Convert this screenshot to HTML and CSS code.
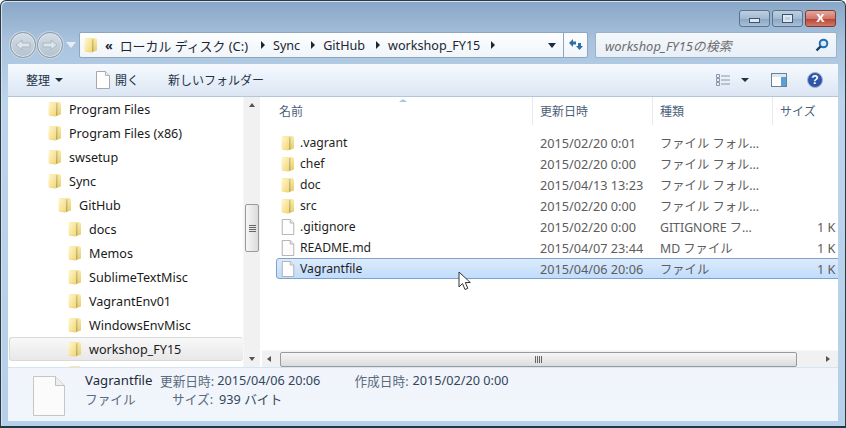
FILE: index.html
```html
<!DOCTYPE html>
<html lang="ja">
<head>
<meta charset="utf-8">
<title>workshop_FY15</title>
<link rel="stylesheet" href="styles.css">
</head>
<body>
<svg class="sprite" width="0" height="0" aria-hidden="true">
  <defs>
    <linearGradient id="fold" x1="0" x2="1" y1="0" y2="1">
      <stop offset="0" stop-color="#fff8d0"/><stop offset="1" stop-color="#f4d676"/>
    </linearGradient>
    <linearGradient id="foldb" x1="0" x2="0" y1="0" y2="1">
      <stop offset="0" stop-color="#cfc68c"/><stop offset="1" stop-color="#a8ab78"/>
    </linearGradient>
    <linearGradient id="foldr" x1="0" x2="0" y1="0" y2="1">
      <stop offset="0" stop-color="#fbeaa6"/><stop offset="1" stop-color="#eccb62"/>
    </linearGradient>
    <symbol id="folder" viewBox="0 0 14 16">
      <path d="M1.500 1h10l1.500 1.500v11l-6 2-5.500-1z" fill="url(#foldr)"/>
      <path d="M.5 1.500l7.500 .8v12.700l-7.500-.8z" fill="url(#fold)"/>
      <path d="M8 2.300l1.500-.6v12.500l-1.500 .8z" fill="url(#foldb)"/>
    </symbol>
    <symbol id="doc" viewBox="0 0 14 18">
      <path d="M.5.500h9l4 4v13h-13z" fill="#fdfdfd" stroke="#a8a8a8"/>
      <path d="M9.500.500v4h4" fill="#eee" stroke="#b0b0b0"/>
    </symbol>
  </defs>
</svg>
<div class="window">
  <div class="caption">
    <div class="capbtn"><span class="glyph-min"></span></div>
    <div class="capbtn"><span class="glyph-max"></span></div>
    <div class="capbtn close"><span class="glyph-x">x</span></div>
  </div>
  <div class="navrow">
    <div class="navpair">
      <div class="round"><svg width="18" height="14" viewBox="0 0 18 14"><path d="M2 7l6-5v3h8v4h-8v3z" fill="#dde5ec" stroke="#aab6c2"/></svg></div>
      <div class="round"><svg width="18" height="14" viewBox="0 0 18 14"><path d="M16 7l-6-5v3h-8v4h8v3z" fill="#dde5ec" stroke="#aab6c2"/></svg></div>
      <span class="navdrop"></span>
    </div>
    <div class="address">
      <svg class="addr-folder" width="14" height="16"><use href="#folder"/></svg>
      <div class="crumbs">
        <span class="chev">«</span>
        <span class="crumb jp">ローカル ディスク (C:)</span><span class="tri"></span>
        <span class="crumb">Sync</span><span class="tri"></span>
        <span class="crumb">GitHub</span><span class="tri"></span>
        <span class="crumb">workshop_FY15</span><span class="tri"></span>
      </div>
      <span class="addr-drop"></span>
      <div class="refresh"><svg width="16" height="14" viewBox="0 0 16 14"><path d="M1 5l4-4v2.500h3v3h-3v2.500z" fill="#2f6fa8"/><path d="M15 8l-3.500 4-3.500-4h2v-3h3v3z" fill="#2f6fa8"/></svg></div>
    </div>
    <div class="search">
      <span class="search-text">workshop_FY15の検索</span>
      <svg width="14" height="14" viewBox="0 0 14 14"><circle cx="8.500" cy="5.500" r="3.800" fill="#dceaf8" stroke="#1f6fb5" stroke-width="2"/><path d="M5.500 8.500l-4 4" stroke="#16406c" stroke-width="2.400"/></svg>
    </div>
  </div>
  <div class="panel">
    <div class="toolbar">
      <span class="tool organize">整理<span class="down"></span></span>
      <span class="tool open"><svg width="14" height="18"><use href="#doc"/></svg>開く</span>
      <span class="tool newfolder">新しいフォルダー</span>
      <span class="tool-right">
        <svg width="15" height="12" viewBox="0 0 15 12"><g fill="none" stroke="#8a97a8"><path d="M.5.500h3v3h-3zM.5 4.500h3v3h-3zM.5 8.500h3v3h-3z"/><path d="M5 2h9M5 6h9M5 10h9"/></g></svg>
        <span class="down view-down"></span>
        <svg class="pane-ico" width="16" height="14" viewBox="0 0 16 14"><rect x=".5" y=".5" width="15" height="13" fill="#fff" stroke="#6c8197"/><rect x="10" y="1" width="5" height="12" fill="#5aa0d0"/><rect x="1" y="1" width="14" height="3" fill="#dfe8f2"/></svg>
        <svg class="help" width="16" height="16" viewBox="0 0 16 16"><circle cx="8" cy="8" r="7.500" fill="#2f55a8" stroke="#9fb6d6"/><text x="8" y="12" text-anchor="middle" class="help-q">?</text></svg>
      </span>
    </div>
    <div class="main">
      <div class="tree">
        <div class="node d1"><svg width="14" height="16"><use href="#folder"/></svg>Program Files</div>
        <div class="node d1"><svg width="14" height="16"><use href="#folder"/></svg>Program Files (x86)</div>
        <div class="node d1"><svg width="14" height="16"><use href="#folder"/></svg>swsetup</div>
        <div class="node d1"><svg width="14" height="16"><use href="#folder"/></svg>Sync</div>
        <div class="node d2"><svg width="14" height="16"><use href="#folder"/></svg>GitHub</div>
        <div class="node d3"><svg width="14" height="16"><use href="#folder"/></svg>docs</div>
        <div class="node d3"><svg width="14" height="16"><use href="#folder"/></svg>Memos</div>
        <div class="node d3"><svg width="14" height="16"><use href="#folder"/></svg>SublimeTextMisc</div>
        <div class="node d3"><svg width="14" height="16"><use href="#folder"/></svg>VagrantEnv01</div>
        <div class="node d3"><svg width="14" height="16"><use href="#folder"/></svg>WindowsEnvMisc</div>
        <div class="node d3 current"><svg width="14" height="16"><use href="#folder"/></svg>workshop_FY15</div>
        <div class="node d3"><svg width="14" height="16"><use href="#folder"/></svg></div>
      </div>
      <div class="vscroll">
        <span class="arrow-up"></span>
        <div class="vtrack"><div class="vthumb"><span class="grip-h"></span></div></div>
        <span class="arrow-down"></span>
      </div>
      <div class="files">
        <div class="header">
          <span class="sort"></span>
          <div class="hcell c-name">名前</div>
          <div class="hcell c-date">更新日時</div>
          <div class="hcell c-type">種類</div>
          <div class="hcell c-size">サイズ</div>
        </div>
        <div class="rows">
          <div class="row"><div class="c-name"><svg width="14" height="16"><use href="#folder"/></svg><span class="fname">.vagrant</span></div><div class="c-date">2015/02/20 0:01</div><div class="c-type">ファイル フォル...</div><div class="c-size"></div></div>
          <div class="row"><div class="c-name"><svg width="14" height="16"><use href="#folder"/></svg><span class="fname">chef</span></div><div class="c-date">2015/02/20 0:00</div><div class="c-type">ファイル フォル...</div><div class="c-size"></div></div>
          <div class="row"><div class="c-name"><svg width="14" height="16"><use href="#folder"/></svg><span class="fname">doc</span></div><div class="c-date">2015/04/13 13:23</div><div class="c-type">ファイル フォル...</div><div class="c-size"></div></div>
          <div class="row"><div class="c-name"><svg width="14" height="16"><use href="#folder"/></svg><span class="fname">src</span></div><div class="c-date">2015/02/20 0:00</div><div class="c-type">ファイル フォル...</div><div class="c-size"></div></div>
          <div class="row"><div class="c-name"><svg width="14" height="16"><use href="#doc"/></svg><span class="fname">.gitignore</span></div><div class="c-date">2015/02/20 0:00</div><div class="c-type">GITIGNORE フ...</div><div class="c-size">1 K</div></div>
          <div class="row"><div class="c-name"><svg width="14" height="16"><use href="#doc"/></svg><span class="fname">README.md</span></div><div class="c-date">2015/04/07 23:44</div><div class="c-type">MD ファイル</div><div class="c-size">1 K</div></div>
          <div class="row selected"><div class="c-name"><svg width="14" height="16"><use href="#doc"/></svg><span class="fname">Vagrantfile</span></div><div class="c-date">2015/04/06 20:06</div><div class="c-type">ファイル</div><div class="c-size">1 K</div></div>
        </div>
        <div class="hscroll">
          <span class="arrow-left"></span>
          <div class="hthumb"><span class="grip-v"></span></div>
          <span class="arrow-right"></span>
        </div>
      </div>
      <svg class="cursor" width="14" height="20" viewBox="0 0 14 20"><path d="M1 1v15l3.500-3.500 2.500 6 2.800-1.200-2.500-5.800h5z" fill="#fff" stroke="#333"/></svg>
    </div>
    <div class="details">
      <svg class="bigdoc" width="32" height="40" viewBox="0 0 32 40"><path d="M.5.500h22l9 9v30h-31z" fill="#fbfbfb" stroke="#c6c6c6"/><path d="M22.500.500v9h9" fill="#eee" stroke="#c0c0c0"/></svg>
      <div class="meta">
        <div class="meta-row"><span class="m-name">Vagrantfile</span><span class="m-label">更新日時:</span><span class="m-val">2015/04/06 20:06</span><span class="m-label m-gap">作成日時:</span><span class="m-val">2015/02/20 0:00</span></div>
        <div class="meta-row"><span class="m-type">ファイル</span><span class="m-label m-size">サイズ:</span><span class="m-val">939 バイト</span></div>
      </div>
    </div>
  </div>
</div>
</body>
</html>
```
FILE: styles.css
```css
* { box-sizing: border-box; }
html, body { margin: 0; padding: 0; }
body {
  width: 846px; height: 428px; overflow: hidden; background: #fff;
  font: 12px "Noto Sans", "Noto Sans CJK JP", sans-serif; color: #1e2a38;
}
svg { flex: none; display: block; }
.sprite { position: absolute; }
.window {
  width: 846px; height: 428px;
  border: 1px solid #2c3a46; border-bottom: 2px solid #1d3a44; border-radius: 6px 6px 0 0;
  background: linear-gradient(#88a6c6 0, #a9c3de 40px, #bcd4ec 100px, #b6d0ea 100%);
  box-shadow: inset 1px 1px 0 #d6e2ee;
  display: flex; flex-direction: column; padding: 0 7px 5px 7px;
  overflow: hidden;
}
.caption { height: 25px; padding: 9px 2px 0 0; display: flex; justify-content: flex-end; flex: none; }
.capbtn {
  width: 31px; height: 17px; margin-left: 2px;
  border: 1px solid #5d7288; border-radius: 3px;
  background: linear-gradient(#bdd0e2, #a2bad2 50%, #8aa6c2 51%, #a6c0da);
  display: flex; align-items: center; justify-content: center;
}
.capbtn.close { width: 31px; border-color: #7a3d36; background: linear-gradient(#e4a79c, #d0776a 50%, #b9412f 51%, #d0796a); }
.glyph-min { width: 11px; height: 5px; margin-top: 4px; background: #dfe8f1; border: 1px solid #41566c; }
.glyph-max { width: 11px; height: 9px; background: #bfd0e0; border: 1px solid #41566c; box-shadow: inset 0 0 0 2px #dfe8f1; }
.glyph-x { font: bold 15px/15px "Liberation Sans", sans-serif; color: #fff; margin-top: -4px; }
.navrow { height: 26px; display: flex; align-items: stretch; flex: none; margin: 6px 0 6px 0; padding-right: 1px; }
.navpair { width: 71px; display: flex; align-items: center; padding-left: 2px; flex: none; }
.round {
  width: 26px; height: 26px; border-radius: 50%; margin-right: 1px;
  border: 1px solid #8d9aa6; box-shadow: 0 0 0 1px #c6d4e2, inset 0 0 0 1px #e2e8ee;
  background: linear-gradient(#d4dde6, #b4c2cf);
  display: flex; align-items: center; justify-content: center;
}
.navdrop { width: 0; height: 0; margin-left: 2px; border: 5px solid transparent; border-top: 6px solid #e7eef6; border-bottom: 0; }
.address {
  width: 509px; border: 1px solid #8fa5bb; border-radius: 2px;
  background: linear-gradient(#fdfeff, #f0f5fa); display: flex; align-items: center; padding-left: 4px; flex: none;
}
.crumbs { flex: 1; display: flex; align-items: center; gap: 0; margin-left: 7px; font-size: 12.6px; color: #1c2530; white-space: nowrap; }
.chev { font-weight: bold; margin-right: 7px; }
.crumb { margin-right: 11px; }
.crumb.jp { font-size: 12.9px; margin-right: 13px; }
.tri { width: 0; height: 0; border-left: 4px solid #1c2530; border-top: 4px solid transparent; border-bottom: 4px solid transparent; margin-right: 8px; }
.addr-drop { width: 0; height: 0; border: 4px solid transparent; border-top: 5px solid #1a2a3c; border-bottom: 0; margin-right: 7px; }
.refresh { width: 24px; height: 100%; border-left: 1px solid #8fa5bb; display: flex; align-items: center; justify-content: center; }
.search {
  width: 242px; margin-left: 7px; flex: none; border: 1px solid #9db2c7; border-radius: 2px;
  background: linear-gradient(#f4f8fc, #e8eff7); display: flex; align-items: center; justify-content: space-between; padding: 0 7px 0 9px;
}
.search-text { font-style: italic; color: #6d6d6d; font-size: 12.9px; }
.panel { flex: 1; display: flex; flex-direction: column; background: #fff; min-height: 0; }
.toolbar {
  height: 33px; flex: none; display: flex; align-items: center; position: relative;
  background: linear-gradient(#f6faff, #e8f0f9 50%, #dbe6f3);
  border-bottom: 1px solid #b3c6da; color: #1e3347; padding-left: 18px;
}
.tool { display: flex; align-items: center; white-space: nowrap; }
.organize { width: 70px; }
.open { width: 72px; gap: 5px; }
.down { display: inline-block; width: 0; height: 0; border: 4px solid transparent; border-top: 4px solid #1e3347; border-bottom: 0; margin-left: 5px; }
.tool-right { margin-left: auto; display: flex; align-items: center; padding-right: 15px; }
.view-down { margin-left: 10px; margin-right: 22px; }
.pane-ico { margin-right: 20px; }
.help-q { font: bold 12px "Liberation Sans", sans-serif; fill: #fff; }
.main { flex: 1; display: flex; min-height: 0; position: relative; }
.tree { width: 235px; flex: none; overflow: hidden; font-size: 12.6px; }
.node { height: 24px; display: flex; align-items: center; gap: 7px; white-space: nowrap; color: #1a1a1a; }
.d1 { padding-left: 40px; }
.d2 { padding-left: 50px; }
.d3 { padding-left: 60px; }
.current {
  margin-left: 1px; padding-left: 58px; border: 1px solid #d9d9d9; border-right: 0; border-radius: 3px;
  background: linear-gradient(#f8f8f8, #e8e8e8);
}
.vscroll { width: 17px; flex: none; background: #f1f1f1; display: flex; flex-direction: column; align-items: center; border-left: 1px solid #f7f7f7; }
.arrow-up, .arrow-down { width: 0; height: 0; border: 3.500px solid transparent; margin: 6px 0; flex: none; }
.arrow-up { border-bottom: 4px solid #555; border-top: 0; }
.arrow-down { border-top: 4px solid #555; border-bottom: 0; }
.vtrack { flex: 1; width: 100%; padding-top: 91px; }
.vthumb {
  height: 48px; margin: 0 1px; border: 1px solid #9a9a9a; border-radius: 2px;
  background: linear-gradient(90deg, #f6f6f6, #dcdcdc); display: flex; align-items: center; justify-content: center;
}
.grip-h { width: 7px; height: 7px; background: repeating-linear-gradient(#666 0 1px, transparent 1px 2px); }
.files { flex: 1; min-width: 0; display: flex; flex-direction: column; margin-left: 2px; overflow: hidden; position: relative; }
.header { height: 28px; flex: none; display: flex; color: #4c607a; position: relative; padding-left: 9px; align-items: stretch; }
.sort { position: absolute; left: 137px; top: 2px; width: 0; height: 0; border: 4px solid transparent; border-bottom: 3px solid #a9c4dc; border-top: 0; }
.hcell { border-right: 1px solid #e6eaf0; padding-top: 5px; padding-left: 8px; }
.c-name { width: 262px; flex: none; }
.c-date { width: 120px; flex: none; padding-left: 7px; }
.c-type { width: 120px; flex: none; padding-left: 7px; white-space: nowrap; }
.c-size { flex: none; width: 64px; padding-left: 44px; white-space: nowrap; }
.hcell.c-date { padding-left: 7px; }
.hcell.c-size { padding-left: 7px; border-right: 0; }
.rows { flex: 1; padding-top: 7px; padding-left: 14px; min-height: 0; }
.row { height: 21px; display: flex; align-items: center; color: #5d5d5d; margin-right: -30px; }
.row .c-name { display: flex; align-items: center; gap: 5px; width: 257px; padding-left: 5px; font-size: 12.2px; }
.row .c-date { font-size: 12.7px; }
.row .c-type { font-size: 12.3px; }
.row .c-size { font-size: 12.7px; }
.fname { color: #1e1e1e; }
.selected {
  border: 1px solid #7da2ce; border-radius: 3px;
  background: linear-gradient(#dcebfc, #c1dcfc);
}
.selected .c-name { padding-left: 4px; width: 256px; }
.hscroll { height: 17px; flex: none; background: #f1f1f1; display: flex; align-items: center; position: relative; border-top: 1px solid #f7f7f7; }
.arrow-left, .arrow-right { width: 0; height: 0; border: 3.500px solid transparent; flex: none; }
.arrow-left { border-right: 4px solid #555; border-left: 0; margin-left: 5px; }
.arrow-right { border-left: 4px solid #555; border-right: 0; margin-left: 29px; }
.hthumb {
  width: 517px; height: 15px; margin-left: 9px; border: 1px solid #9a9a9a; border-radius: 2px;
  background: linear-gradient(#f6f6f6, #dcdcdc); display: flex; align-items: center; justify-content: center;
}
.grip-v { width: 7px; height: 7px; background: repeating-linear-gradient(90deg, #666 0 1px, transparent 1px 2px); }
.cursor { position: absolute; left: 450px; top: 174px; }
.details {
  height: 54px; flex: none; background: linear-gradient(#f1f5fb, #f1f5fc); border-top: 1px solid #d6e3f0;
  display: flex; padding-left: 25px; color: #5a6b7d;
}
.bigdoc { margin-top: 8px; }
.meta { margin-left: 20px; padding-top: 3px; font-size: 12.7px; }
.meta-row { height: 18px; display: flex; align-items: center; white-space: nowrap; }
.m-name { color: #1e2a38; width: 75px; font-size: 13.2px; }
.m-label { margin-right: 3px; }
.m-val { color: #33475b; }
.m-gap { margin-left: 34px; margin-right: 4px; }
.m-type { width: 87px; }
.m-size { margin-right: 6px; }
```
